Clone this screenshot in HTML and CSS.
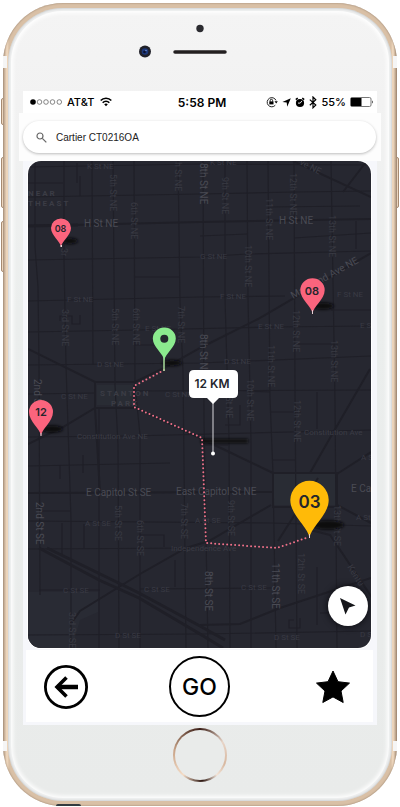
FILE: index.html
```html
<!DOCTYPE html>
<html lang="en">
<head>
<meta charset="utf-8">
<meta name="viewport" content="width=device-width, initial-scale=1">
<title>Route map</title>
<link rel="stylesheet" href="styles.css">
</head>
<body>
<div class="phone">
  <span class="side mute"></span><span class="side up"></span><span class="side down"></span><span class="side power"></span>
  <div class="bezel"><div class="face">
    <header class="hardware">
      <svg width="126" height="42" viewBox="138 20 126 42" aria-hidden="true">
        <circle cx="201" cy="28.500" r="3.700" fill="#2b2b30"/>
        <circle cx="146" cy="51.500" r="6" fill="#202129"/><circle cx="146" cy="51.500" r="3.300" fill="#1c3778"/><circle cx="145.500" cy="52" r="1.300" fill="#0c1230"/><circle cx="147" cy="50.500" r=".8" fill="#6f91cf"/>
        <path d="M176 52h50" stroke="#231f20" stroke-width="3.500" stroke-linecap="round"/>
      </svg>
    </header>
    <main class="screen">
      <div class="status">
        <div class="carrier">
          <svg width="33" height="8" viewBox="0 0 33 8" aria-hidden="true"><circle cx="3" cy="4" r="2.800"/><g fill="none" stroke="#555" stroke-width=".7"><circle cx="9.500" cy="4" r="2.300"/><circle cx="16" cy="4" r="2.300"/><circle cx="22.500" cy="4" r="2.300"/><circle cx="29.300" cy="4" r="2.300"/></g></svg>
          <span>AT&amp;T</span>
          <svg width="12" height="10" viewBox="0 0 12 10" fill="none" stroke="#000" stroke-width="1.600" aria-hidden="true"><path d="M.7 3.500C3.500.4 8.500.4 11.300 3.500M2.700 5.700c1.800-2 4.800-2 6.600 0"/><path d="M4.200 7.300c1-1 2.600-1 3.600 0L6 9.300z" fill="#000" stroke="none"/></svg>
        </div>
        <time>5:58 PM</time>
        <div class="indicators">
          <svg width="12" height="12" viewBox="0 0 12 12" aria-hidden="true"><path d="M9.300 9.200A4.600 4.600 0 1 1 10 4.400" fill="none" stroke="#222"/><path d="M8.500 5.200h3.300L10.200 7.600z"/><path d="M3.300 5.400h4.200v3H3.300z"/><path d="M4.200 5.700V4.500a1.200 1.200 0 0 1 2.400 0v1.200" fill="none" stroke="#000" stroke-width=".9"/></svg>
          <svg width="9" height="9" viewBox="0 0 9 9" aria-hidden="true"><path d="M8.800.2 5.200 8.700 4.700 4.500.4 4.100z"/></svg>
          <svg width="10" height="11" viewBox="0 0 10 11" aria-hidden="true"><circle cx="5" cy="6" r="4.100"/><path d="M.8 2.600 2.700 1M9.200 2.600 7.300 1" stroke="#000" stroke-width="1.500"/><path d="M5.200 6.100 7 3.800M5.200 6.100H3" stroke="#fff" stroke-width=".9"/></svg>
          <svg width="8" height="13" viewBox="0 0 8 13" fill="none" stroke="#000" stroke-width="1.200" aria-hidden="true"><path d="m.8 3.600 6 5.400L4 11.800V1l2.800 2.800-6 5.400"/></svg>
          <span>55%</span>
          <svg width="24" height="10" viewBox="0 0 24 10" aria-hidden="true"><rect x=".5" y=".5" width="20.500" height="9" rx="1.500" fill="#fff" stroke="#777"/><path d="M1 1h10.500v8H1z"/><path d="M22 3.200q1.600 1.800 0 3.600z"/></svg>
        </div>
      </div>
      <form class="search" role="search">
        <label class="pill">
          <svg width="11" height="11" viewBox="0 0 11 11" fill="none" stroke="#666" stroke-width="1.200" aria-hidden="true"><circle cx="4" cy="4" r="3"/><path d="m6.300 6.300 4 4"/></svg>
          <input type="search" aria-label="Search" value="Cartier CT0216OA">
        </label>
      </form>
      <section class="map">
        <svg class="canvas" viewBox="28 161 343 487" role="img" aria-label="Street map with a route">
          <defs>
            <path id="pin" d="M0 20C-.5 14-10 8-10 0A10 10 0 0 1 10 0C10 8 .5 14 0 20z"/>
            <filter id="soft" x="-30%" y="-100%" width="160%" height="300%"><feGaussianBlur stdDeviation="1.500"/></filter>
          </defs>
          <path fill="#262730" d="M28 161h343v487H28z"/>
          <path fill="#292c34" d="M273 474h64v31h-64zM97 385h37v20H97z"/>
          <path fill="#292b34" d="M28 592h70v20l-18 8-8 28H28z"/>
          <g class="roads">
            <path d="M28 167 200 164l171 1M28 197l172-3 95-2 76-1M268 207l92-1M200 236l47-2M294 238l77-5M28 260l172-3 47-3 124-3M134 277h46M28 301l172-4 85-1M331 310h40M28 332l110-2 133-3 100-1M28 365l172-2 171-7M298 344h40M28 394l67-1M134 391l237-1M200 389l70 3M28 437l103-1 240-6M28 466l142-3M28 493l245-1M39 511h31M28 521l243 2 100 3M28 549l172-1M39 590h61M140 589l132-1M28 635l172-1 171-3M271 412h30M272 460h24M140 535h24v12M134 345h36M60 321v-5h12v8h8v-9M28 183h35M200 445h28M225 425h15v-20M320 613h18M294 620h-5v8h11v-10"/>
            <path d="M35 161v86l3 40 1 78 1 230M64 161v99l2 105 5 155v128M92 161l1 204M99 409v239M113 161l2 224 3 60 1 203M134 161l1 224 5 50v213M178 161l2 141 3 70 3 276M203 161l1 261 4 226M225 161v137l4 140 1 210M247 161l1 137 3 143v207M268 161l2 237 3 76 3 174M294 161l1 230 2 257M331 161l4 241 2 246M356 221v28M80 176v20M77 163v20M317 392v37M60 465v14M83 455v18M317 567v58M62 523v32M84 524v24M175 560v27"/>
            <path class="avenue" d="M28 226 200 222l171-3M28 349l67 33h40l31-15 34-19 58-29 113-66M134 408H95L63 427l-35 17M95 382v26l5 85M134 385v22l66 31M203 440l20 9 50 24v34h64v-34h-64M337 474l34-22M337 505l34 18M293 161l78 36M343 192l23-30M271 505l-62 36-23 7-46 26-60 37-10 14M28 493l245-1M310 473l20-35 40-69M200 625l40-1 40-16 91-30M310 530l20 5 45 67M318 478l-40 63"/>
            <path class="avenue bold" d="m39 548 60 32 40 18 61 36 23 14M47 548l92 45 61 33 25 14M28 226l50-1"/>
          </g>
          <g class="streets">
            <g class="small"><text x="87" y="169">K St NE</text><text x="210" y="165">K St NE</text><text x="67" y="302">F St NE</text><text x="200" y="259">G St NE</text><text x="220" y="299">F St NE</text><text x="337" y="297">F St NE</text><text x="145" y="331">E St NE</text><text x="258" y="329">E St NE</text><text x="360" y="328">E S</text><text x="97" y="367">D St NE</text><text x="224" y="364">D St NE</text><text x="61" y="399">C St NE</text><text x="165" y="397">C St NE</text><text x="85" y="526">A St SE</text><text x="195" y="523">A St SE</text><text x="356" y="520">A St</text><text x="361" y="460">A S</text><text x="63" y="593">C St SE</text><text x="144" y="592">C St SE</text><text x="241" y="590">C St SE</text><text x="115" y="638">D St SE</text><text x="274" y="640">D St SE</text><text x="360" y="637">D S</text></g>
            <text x="77" y="439">Constitution Ave NE</text><text x="304" y="435">Constitution Ave</text><text x="171" y="551">Independence Ave</text>
            <g class="large"><text x="84" y="227">H St NE</text><text x="279" y="224">H St NE</text><text x="86" y="496">E Capitol St SE</text><text x="176" y="495">East Capitol St NE</text><text x="351" y="492">E Ca</text></g>
            <text class="large" transform="translate(293 299)rotate(-29)">Maryland Ave NE</text><text class="medium" transform="translate(299 164)rotate(28)">ve NE</text>
            <g class="district"><text x="28" y="196">NEAR</text><text x="28" y="206">THEAST</text><text x="100" y="396">STANTON</text><text x="111" y="406">PARK</text></g>
            <g class="vertical"><text transform="translate(110 174)rotate(90)">5th St NE</text><text transform="translate(131 202)rotate(90)">6th St NE</text><text transform="translate(175 162)rotate(90)">h St NE</text><text transform="translate(222 177)rotate(90)">9th St NE</text><text transform="translate(245 245)rotate(90)">10th St NE</text><text transform="translate(266 198)rotate(90)">11th St NE</text><text transform="translate(290 173)rotate(90)">12th St NE</text><text transform="translate(329 215)rotate(90)">13th St NE</text><text transform="translate(62 309)rotate(90)">3rd St NE</text><text transform="translate(112 308)rotate(90)">5th St NE</text><text transform="translate(133 308)rotate(90)">6th St NE</text><text transform="translate(178 306)rotate(90)">7th St NE</text><text transform="translate(268 345)rotate(90)">11th St NE</text><text transform="translate(293 310)rotate(90)">12th St NE</text><text transform="translate(331 340)rotate(90)">13th St NE</text><text transform="translate(247 379)rotate(90)">10th St NE</text><text transform="translate(226 381)rotate(90)">9th St NE</text><text transform="translate(294 400)rotate(90)">12th St NE</text><text transform="translate(115 505)rotate(90)">5th St SE</text><text transform="translate(137 520)rotate(90)">6th St SE</text><text transform="translate(181 503)rotate(90)">7th St SE</text><text transform="translate(228 500)rotate(90)">9th St SE</text><text transform="translate(298 553)rotate(90)">12th St SE</text><text transform="translate(334 505)rotate(90)">13th St SE</text><text transform="translate(69 612)rotate(90)">3rd St SE</text><text transform="translate(61 248)rotate(90)">3r</text><text transform="translate(347 567)rotate(58)">Kentu</text></g>
            <g class="large"><text transform="translate(34 379)rotate(90)">2nd St NE</text><text transform="translate(36 502)rotate(90)">2nd St SE</text><text transform="translate(200 163)rotate(90)">8th St NE</text><text transform="translate(200 334)rotate(90)">8th St NE</text><text transform="translate(205 571)rotate(90)">8th St SE</text><text transform="translate(272 563)rotate(90)">11th St SE</text></g>
          </g>
          <g fill="#08080c" filter="url(#soft)"><ellipse cx="70" cy="241" rx="8" ry="3"/><ellipse cx="323" cy="306" rx="11" ry="3.500"/><ellipse cx="172" cy="363" rx="10" ry="3"/><ellipse cx="52" cy="429" rx="11" ry="3.500"/><path d="M201 439h47v4h-47z"/><ellipse cx="328" cy="525" rx="16" ry="4.500"/></g>
          <path class="route" d="m164 370-30 16v21l68 31 4 105 71 5 32-11"/>
          <path d="M213 402v51" stroke="#d8d8dc"/><circle cx="213" cy="453.500" r="2" fill="#fff"/>
          <path fill="#fff" d="M194 370h39q5 0 5 5v18q0 5-5 5h-14l-6 6-6-6h-13q-5 0-5-5v-18q0-5 5-5z"/>
          <path d="M164 349v22" stroke="#a9dc9d" stroke-width="1.500"/>
          <use href="#pin" transform="translate(61 228)scale(1 .95)" fill="#fb647d"/>
          <use href="#pin" transform="translate(312.500 290)scale(1.220 1.180)" fill="#fb647d"/>
          <use href="#pin" transform="translate(41 412)scale(1.200)" fill="#fb647d"/>
          <use href="#pin" transform="translate(164.300 338.500)scale(1.150 1.100)" fill="#8beb8e"/><circle cx="164.300" cy="338.800" r="4" fill="#24292e"/>
          <use href="#pin" transform="translate(309.500 500)scale(1.920)" fill="#ffba08"/>
          <path d="M60.500 245h1.500v2h-1.500zM312 310h1v4h-1zM40.500 433h1v3h-1zM309 534h1v4h-1z" fill="#e8ced3"/>
          <g class="marks"><text class="mini" x="60.500" y="232">08</text><text x="312" y="295">08</text><text x="41" y="416">12</text><text class="big" x="309.500" y="508">03</text><text class="distance" x="212" y="388">12 KM</text></g>
        </svg>
        <button class="locate" type="button" aria-label="My location"><svg width="18" height="20" viewBox="0 0 18 20" aria-hidden="true"><path d="m1 2 15.500 7.500-6.500 2-3.500 7z" fill="#15161a"/></svg></button>
      </section>
      <nav class="actions" aria-label="Route actions">
        <button class="back" type="button" aria-label="Back"><svg width="46" height="46" viewBox="0 0 46 46" fill="none" stroke="#000" aria-hidden="true"><circle cx="23" cy="23" r="20.600" stroke-width="2.800"/><path d="M35 23H14" stroke-width="4.500"/><path d="m23.500 13.500-9.500 9.500 9.500 9.500" stroke-width="3.600"/></svg></button>
        <button class="go" type="button">GO</button>
        <button class="star" type="button" aria-label="Favorite"><svg width="46" height="36" viewBox="-5 0 46 36" aria-hidden="true"><path d="m18 2 5 10.700 11.500 1.400-8.500 7.900 2.200 11.500L18 27.900 7.800 33.500 10 22 1.500 14.100 13 12.700z" stroke="#000" stroke-linejoin="round"/></svg></button>
      </nav>
    </main>
    <footer class="chin"><span class="home"></span></footer>
  </div></div>
  <span class="band band-top"></span><span class="band band-bottom"></span><span class="dark-spot"></span>
</div>
</body>
</html>
```

FILE: styles.css
```css
* { box-sizing: border-box; }
body { margin: 0; background: #fff; font-family: Inter, "Liberation Sans", sans-serif; }
button { padding: 0; border: 0; background: none; color: #000; cursor: pointer; }
svg { display: block; }

.phone {
  position: relative;
  margin: 3px;
  padding: 5px;
  border-radius: 60px;
  background: linear-gradient(90deg, #b49c86, #f3dcc2 4px, #d9c0a6 6px, #d9c0a6 calc(100% - 6px), #f3dcc2 calc(100% - 4px), #a48c76);
  box-shadow: inset 0 0 2px #8d7763;
}
.bezel {
  padding: 3px;
  border-radius: 55px;
  background: #f0f1f1;
  box-shadow: inset 0 0 3px #b0b4b7;
}
.face {
  border-radius: 52px;
  background: linear-gradient(#f4f4f4, #f2f2f2 90px, #ebeeed 300px, #e9ebea);
  box-shadow: inset 0 0 4px 2px #fff;
}
.hardware { height: 80px; padding-top: 9px; }
.hardware svg { margin: 0 auto; }

.side { position: absolute; z-index: -1; left: -2px; width: 6px; border: 1px solid #a78a70; border-radius: 2px; background: #ecd6bf; }
.mute { top: 95px; height: 27px; }
.up { top: 154px; height: 51px; }
.down { top: 218px; height: 51px; }
.power { top: 154px; left: auto; right: -2px; height: 51px; }
.band { position: absolute; left: 0; right: 0; height: 12px; border: solid #f5f5f5; border-width: 0 4px; pointer-events: none; }
.band-top { top: 53px; }
.band-bottom { bottom: 55px; height: 10px; }
.dark-spot { position: absolute; left: 53px; bottom: 0; width: 25px; height: 2px; border-radius: 12px 12px 0 0; background: #333b40; }

.screen { margin: 0 12px; padding-bottom: 3px; background: #f6f7fb; }
.status {
  display: grid;
  grid-template-columns: 1fr auto 1fr;
  align-items: center;
  height: 22px;
  padding: 0 3px 0 7px;
  background: #fff;
  font-size: 11px;
  font-weight: 500;
}
.status time { font-size: 12px; font-weight: 600; }
.carrier, .indicators { display: flex; align-items: center; gap: 4px; }
.carrier span { margin-right: 2px; }
.indicators { justify-content: flex-end; white-space: nowrap; }

.search { margin: 0 -4px; padding: 8px 5px 8px 4px; background: #fdfdfd; }
.pill {
  display: flex;
  align-items: center;
  gap: 9px;
  height: 32px;
  padding: 0 13px;
  border-radius: 16px;
  background: #fff;
  box-shadow: 0 1px 3px #bbb;
}
.pill input { flex: 1; min-width: 0; padding: 0; border: 0; outline: 0; background: none; color: #222; font: 10px "Liberation Sans", sans-serif; }

.map { position: relative; margin: 0 6px 0 5px; overflow: hidden; border-radius: 13px; box-shadow: 0 0 0 1px #fff; }
.canvas { width: 100%; height: auto; }
.roads { fill: none; stroke: #1f1f27; stroke-width: 1.2px; }
.avenue { stroke-width: 2px; }
.bold { stroke-width: 3px; }
.streets { fill: #3b3c45; font-family: Roboto, sans-serif; font-size: 8px; }
.small { fill: #393a44; }
.medium { font-size: 9px; }
.large { font-size: 10px; fill: #4a4b54; }
.vertical { fill: #393a43; font-size: 9px; }
.district { font-weight: 700; font-size: 8px; letter-spacing: 2px; }
.route { fill: none; stroke: #ef7189; stroke-width: 2px; stroke-linecap: round; stroke-dasharray: 0 4px; }
.marks { fill: #24252c; font-size: 11px; font-weight: 600; text-anchor: middle; }
.marks .mini { font-size: 9px; }
.marks .big { font-size: 17px; }
.marks .distance { font-size: 12px; }
.locate {
  position: absolute;
  right: 3px;
  bottom: 22px;
  display: grid;
  place-items: center;
  width: 40px;
  height: 40px;
  border-radius: 50%;
  background: #fff;
  box-shadow: 0 0 7px #08080c;
}

.actions {
  display: grid;
  grid-template-columns: 1fr auto 1fr;
  align-items: center;
  margin: 2px 4px 0 3px;
  padding: 6px 17px 5px;
  background: #fff;
}
.back { justify-self: start; }
.go { width: 61px; height: 61px; border: 2px solid #000; border-radius: 50%; font: 500 23px Inter, sans-serif; }
.star { justify-self: end; }

.chin { padding: 3px 0 16px; }
.home {
  display: block;
  width: 54px;
  height: 54px;
  margin: 0 auto;
  border: 2px solid transparent;
  border-radius: 50%;
  background: linear-gradient(#e9ebea, #e9ebea) padding-box, conic-gradient(#3a1d16, #e8d5c8 60deg, #d8b8a0 110deg, #f3e4d8 140deg, #2d1711 175deg, #f5ddc8 220deg, #c9a488 280deg, #3a1d16) border-box;
}
```
